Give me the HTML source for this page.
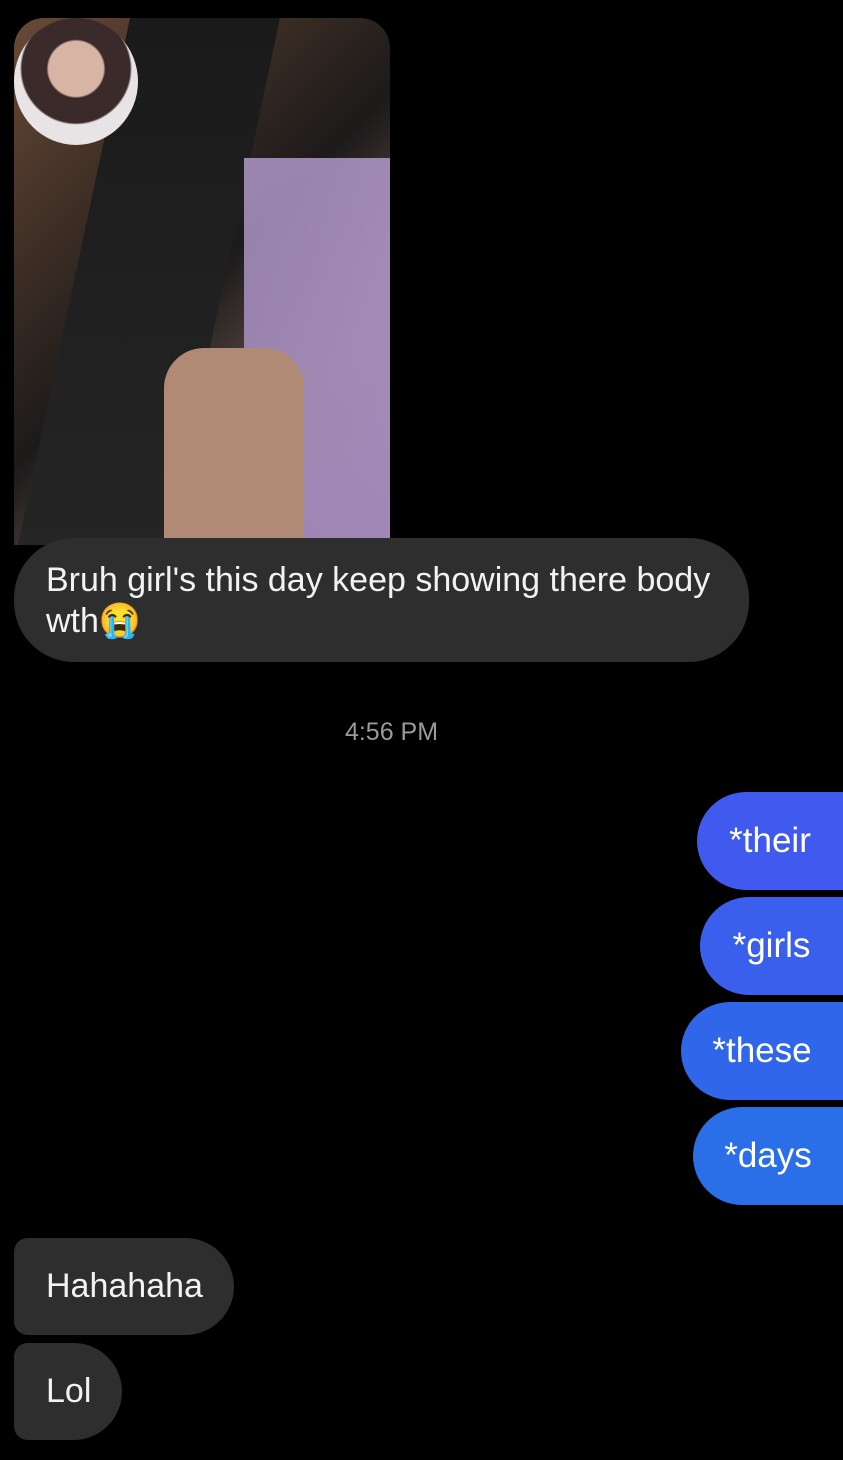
<!DOCTYPE html>
<html><head><meta charset="utf-8"><style>
body{margin:0;width:843px;height:1460px;background:#000;position:relative;overflow:hidden;font-family:"Liberation Sans",sans-serif;}
.a{position:absolute;box-sizing:border-box;color:#f2f2f2;font-size:34px;}
.g{background:#2e2e2e;}
.b{color:#fff;border-radius:49px 14px 14px 49px;display:flex;align-items:center;justify-content:center;font-size:35px;}
</style></head><body>
<div class="a" style="left:14px;top:18px;width:376px;height:527px;border-radius:30px 30px 0 0;overflow:hidden;background:linear-gradient(135deg,#6a4a36 0%,#3a2c24 30%,#1c1a1a 50%,#6e5a52 75%,#8a7084 100%);">
  <div style="position:absolute;left:60px;top:0;width:150px;height:527px;background:linear-gradient(180deg,#1a1a1a,#252525);transform:skewX(-12deg);"></div>
  <div style="position:absolute;left:230px;top:140px;width:146px;height:387px;background:linear-gradient(180deg,#b9a0d6,#a68cc4);opacity:.8;"></div>
  <div style="position:absolute;left:150px;top:330px;width:140px;height:197px;background:#b08a74;border-radius:40px 40px 0 0;"></div>
  <div style="position:absolute;left:0;top:0;width:124px;height:127px;border-radius:50%;background:radial-gradient(circle at 50% 40%,#d8b4a4 0 28%,#3a2a2a 30% 55%,#e8e4e6 57%);"></div>
</div>
<div class="a g" style="left:14px;top:538px;width:735px;height:124px;border-radius:60px;padding:22px 0 0 32px;line-height:41px;white-space:nowrap;">Bruh girl's this day keep showing there body<br>wth😭</div>
<div class="a" style="left:0;width:783px;top:718px;text-align:center;color:#9a9a9a;font-size:25px;">4:56 PM</div>
<div class="a b" style="left:697px;top:792px;width:160px;height:98px;background:#4059ee;padding-right:14px;">*their</div>
<div class="a b" style="left:700px;top:897px;width:157px;height:98px;background:#3a5fec;padding-right:14px;">*girls</div>
<div class="a b" style="left:681px;top:1002px;width:176px;height:98px;background:#3066ea;padding-right:14px;">*these</div>
<div class="a b" style="left:693px;top:1107px;width:164px;height:98px;background:#2a6fe8;padding-right:14px;">*days</div>
<div class="a g" style="left:14px;top:1238px;width:220px;height:97px;border-radius:14px 49px 49px 14px;padding-left:32px;line-height:97px;">Hahahaha</div>
<div class="a g" style="left:14px;top:1343px;width:108px;height:97px;border-radius:14px 49px 49px 14px;padding-left:32px;line-height:97px;">Lol</div>
</body></html>
